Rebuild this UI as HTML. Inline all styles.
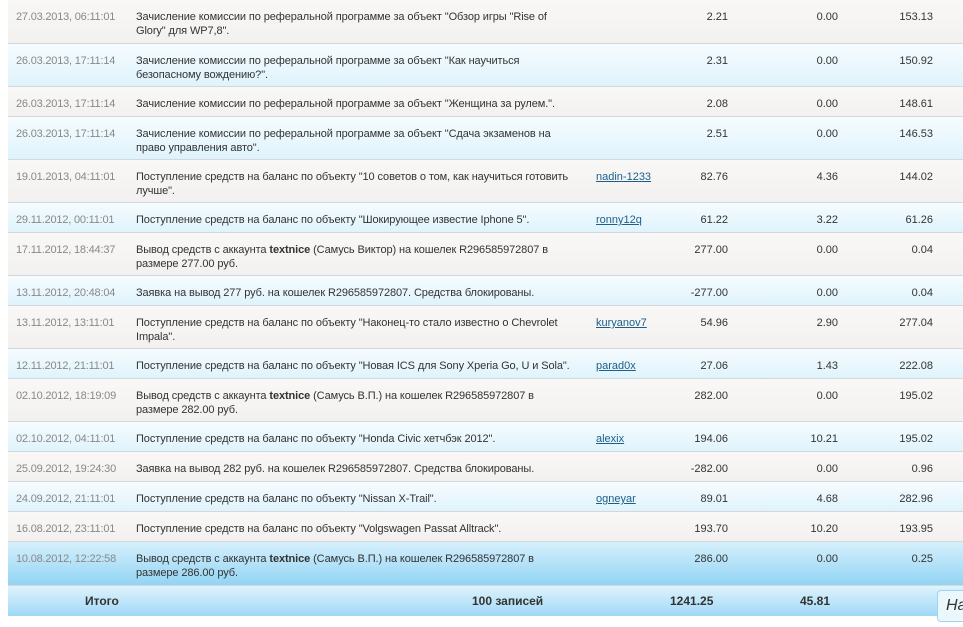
<!DOCTYPE html>
<html><head><meta charset="utf-8"><style>
body{margin:0;width:963px;height:627px;overflow:hidden;background:#fff;font-family:"Liberation Sans",Tahoma,sans-serif;font-size:11px;color:#333}
.r{position:absolute;left:8px;width:960px;border-bottom:1px solid #d4d8dc;box-sizing:border-box}
.g{background:linear-gradient(#f9f8f6,#f2f1ef)}
.b{background:linear-gradient(#f6fcff,#dff3fc)}
.h{background:linear-gradient(#d6f0fc,#92d4f4)}
.r div{position:absolute;top:10px;line-height:14px}
.d{left:8px;color:#888;white-space:nowrap;letter-spacing:-0.2px}
.t{left:128px;white-space:nowrap;letter-spacing:-0.1px}
.u{left:588px;color:#1b5f8a;text-decoration:underline}
.a{right:240px;text-align:right}
.c{right:130px;text-align:right}
.s{right:35px;text-align:right}
.f{position:absolute;left:8px;top:586px;width:960px;height:30px;background:linear-gradient(#dff3fd,#9fd9f6);font-weight:bold;font-size:12px;color:#333}
.f div{position:absolute;top:8px}
.na{position:absolute;left:937px;top:590px;width:40px;height:32px;border:1px solid #9fd4ef;border-radius:4px;background:#eaf7fd;font-style:italic;font-size:16px;color:#333;box-sizing:border-box;padding:6px 0 0 8px}
</style></head><body>
<div class="r g" style="top:0;height:44px"><div class="d">27.03.2013, 06:11:01</div><div class="t">Зачисление комиссии по реферальной программе за объект "Обзор игры "Rise of<br>Glory" для WP7,8".</div><div class="a">2.21</div><div class="c">0.00</div><div class="s">153.13</div></div>
<div class="r b" style="top:44px;height:43px"><div class="d">26.03.2013, 17:11:14</div><div class="t">Зачисление комиссии по реферальной программе за объект "Как научиться<br>безопасному вождению?".</div><div class="a">2.31</div><div class="c">0.00</div><div class="s">150.92</div></div>
<div class="r g" style="top:87px;height:30px"><div class="d">26.03.2013, 17:11:14</div><div class="t">Зачисление комиссии по реферальной программе за объект "Женщина за рулем.".</div><div class="a">2.08</div><div class="c">0.00</div><div class="s">148.61</div></div>
<div class="r b" style="top:117px;height:43px"><div class="d">26.03.2013, 17:11:14</div><div class="t">Зачисление комиссии по реферальной программе за объект "Сдача экзаменов на<br>право управления авто".</div><div class="a">2.51</div><div class="c">0.00</div><div class="s">146.53</div></div>
<div class="r g" style="top:160px;height:43px"><div class="d">19.01.2013, 04:11:01</div><div class="t">Поступление средств на баланс по объекту "10 советов о том, как научиться готовить<br>лучше".</div><div class="u">nadin-1233</div><div class="a">82.76</div><div class="c">4.36</div><div class="s">144.02</div></div>
<div class="r b" style="top:203px;height:30px"><div class="d">29.11.2012, 00:11:01</div><div class="t">Поступление средств на баланс по объекту "Шокирующее известие Iphone 5".</div><div class="u">ronny12q</div><div class="a">61.22</div><div class="c">3.22</div><div class="s">61.26</div></div>
<div class="r g" style="top:233px;height:43px"><div class="d">17.11.2012, 18:44:37</div><div class="t">Вывод средств с аккаунта <b>textnice</b> (Самусь Виктор) на кошелек R296585972807 в<br>размере 277.00 руб.</div><div class="a">277.00</div><div class="c">0.00</div><div class="s">0.04</div></div>
<div class="r b" style="top:276px;height:30px"><div class="d">13.11.2012, 20:48:04</div><div class="t">Заявка на вывод 277 руб. на кошелек R296585972807. Средства блокированы.</div><div class="a">-277.00</div><div class="c">0.00</div><div class="s">0.04</div></div>
<div class="r g" style="top:306px;height:43px"><div class="d">13.11.2012, 13:11:01</div><div class="t">Поступление средств на баланс по объекту "Наконец-то стало известно о Chevrolet<br>Impala".</div><div class="u">kuryanov7</div><div class="a">54.96</div><div class="c">2.90</div><div class="s">277.04</div></div>
<div class="r b" style="top:349px;height:30px"><div class="d">12.11.2012, 21:11:01</div><div class="t">Поступление средств на баланс по объекту "Новая ICS для Sony Xperia Go, U и Sola".</div><div class="u">parad0x</div><div class="a">27.06</div><div class="c">1.43</div><div class="s">222.08</div></div>
<div class="r g" style="top:379px;height:43px"><div class="d">02.10.2012, 18:19:09</div><div class="t">Вывод средств с аккаунта <b>textnice</b> (Самусь В.П.) на кошелек R296585972807 в<br>размере 282.00 руб.</div><div class="a">282.00</div><div class="c">0.00</div><div class="s">195.02</div></div>
<div class="r b" style="top:422px;height:30px"><div class="d">02.10.2012, 04:11:01</div><div class="t">Поступление средств на баланс по объекту "Honda Civic хетчбэк 2012".</div><div class="u">alexix</div><div class="a">194.06</div><div class="c">10.21</div><div class="s">195.02</div></div>
<div class="r g" style="top:452px;height:30px"><div class="d">25.09.2012, 19:24:30</div><div class="t">Заявка на вывод 282 руб. на кошелек R296585972807. Средства блокированы.</div><div class="a">-282.00</div><div class="c">0.00</div><div class="s">0.96</div></div>
<div class="r b" style="top:482px;height:30px"><div class="d">24.09.2012, 21:11:01</div><div class="t">Поступление средств на баланс по объекту "Nissan X-Trail".</div><div class="u">ogneyar</div><div class="a">89.01</div><div class="c">4.68</div><div class="s">282.96</div></div>
<div class="r g" style="top:512px;height:30px"><div class="d">16.08.2012, 23:11:01</div><div class="t">Поступление средств на баланс по объекту "Volgswagen Passat Alltrack".</div><div class="a">193.70</div><div class="c">10.20</div><div class="s">193.95</div></div>
<div class="r h" style="top:542px;height:44px"><div class="d">10.08.2012, 12:22:58</div><div class="t">Вывод средств с аккаунта <b>textnice</b> (Самусь В.П.) на кошелек R296585972807 в<br>размере 286.00 руб.</div><div class="a">286.00</div><div class="c">0.00</div><div class="s">0.25</div></div>
<div class="f"><div style="left:77px">Итого</div><div style="left:464px">100 записей</div><div style="left:662px">1241.25</div><div style="left:792px">45.81</div></div>
<div class="na">На</div>
</body></html>
